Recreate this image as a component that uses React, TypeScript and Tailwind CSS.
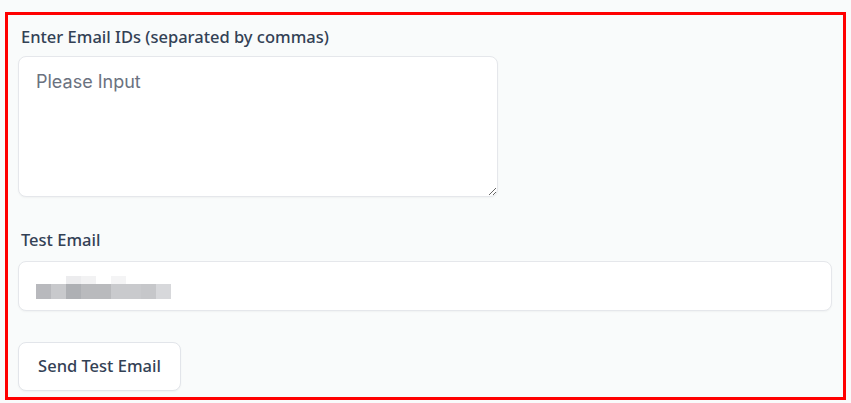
import React from 'react';

const blur = [
  { top: '', main: '#b8b9bd' },
  { top: '', main: '#c8c9cc' },
  { top: '#ececee', main: '#aeb0b4' },
  { top: '#f2f2f3', main: '#b9babd' },
  { top: '', main: '#b9babd' },
  { top: '#f4f4f5', main: '#c9cacd' },
  { top: '', main: '#c9cacd' },
  { top: '', main: '#c6c7ca' },
  { top: '', main: '#d7d8db' },
];

export default function App() {
  return (
    <div className="w-[851px] h-[403px] bg-[#f9fbfb] pt-[12px] px-[5px]" style={{ fontFamily: '"Noto Sans", "Open Sans", sans-serif' }}>
      <div className="h-[388px] border-[3px] border-[#ff0000] bg-[#f9fbfb] px-[10px] pt-[11px] flex flex-col">
        <label className="pl-[3px] text-[16.5px] leading-[22px] font-medium text-[#334155]">
          Enter Email IDs (separated by commas)
        </label>
        <textarea
          placeholder="Please Input"
          className="mt-[8px] w-[480px] h-[141px] rounded-lg border border-[#e5e7eb] bg-white px-[17px] py-[12px] text-[18px] leading-[26px] text-[#334155] placeholder:text-[#6b7280] shadow-[0_1px_2px_rgba(0,0,0,0.04)] outline-none"
          style={{ fontFamily: 'Inter, "Noto Sans", sans-serif' }}
        />

        <label className="mt-[32px] pl-[3px] text-[16.5px] leading-[22px] font-medium text-[#334155]">
          Test Email
        </label>
        <div className="mt-[10px] h-[50px] w-[814px] rounded-lg border border-[#e5e7eb] bg-white pl-[17px] flex items-center shadow-[0_1px_2px_rgba(0,0,0,0.04)]">
          <div className="flex flex-col mt-[2px]">
            <div className="flex h-[8px]">
              {blur.map((b, i) => (
                <div key={i} className="w-[15px] h-[8px]" style={{ background: b.top || 'transparent' }} />
              ))}
            </div>
            <div className="flex h-[15px]">
              {blur.map((b, i) => (
                <div key={i} className="w-[15px] h-[15px]" style={{ background: b.main }} />
              ))}
            </div>
          </div>
        </div>

        <button className="mt-[31px] w-[163px] h-[49px] rounded-lg border border-[#e2e5ea] bg-white text-[16.5px] font-medium text-[#334155] shadow-[0_1px_2px_rgba(0,0,0,0.04)]">
          Send Test Email
        </button>
      </div>
    </div>
  );
}
